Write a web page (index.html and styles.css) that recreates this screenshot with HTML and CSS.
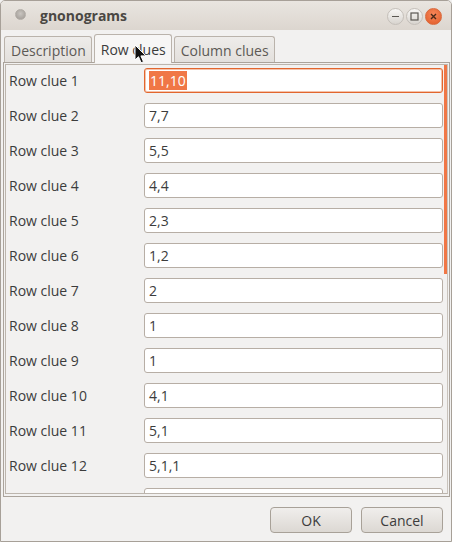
FILE: index.html
```html
<!DOCTYPE html>
<html>
<head>
<meta charset="utf-8">
<title>gnonograms</title>
<link rel="stylesheet" href="styles.css">
</head>
<body>
<div class="window">
  <div class="titlebar">
    <span class="app-dot"></span>
    <span class="title">gnonograms</span>
    <div class="wm-buttons">
      <span class="wm-btn"><svg width="17" height="17" viewBox="0 0 17 17"><path d="M5 8.5h7" stroke="#5a5752" stroke-width="1.2"/></svg></span>
      <span class="wm-btn"><svg width="17" height="17" viewBox="0 0 17 17"><rect x="5" y="5" width="7" height="7" fill="none" stroke="#5a5752" stroke-width="1.2"/></svg></span>
      <span class="wm-btn close"><svg width="17" height="17" viewBox="0 0 17 17"><path d="M6 6l5 5M11 6l-5 5" stroke="#4a2a1a" stroke-width="1.4"/></svg></span>
    </div>
  </div>
  <div class="notebook">
    <div class="tabs">
      <div class="tab">Description</div>
      <div class="tab active">Row clues</div>
      <div class="tab">Column clues</div>
    </div>
    <div class="page">
      <div class="scroller">
        <div class="rows">
          <div class="row"><span class="label">Row clue 1</span><div class="entry focus"><span class="sel">11,10</span></div></div>
          <div class="row"><span class="label">Row clue 2</span><div class="entry">7,7</div></div>
          <div class="row"><span class="label">Row clue 3</span><div class="entry">5,5</div></div>
          <div class="row"><span class="label">Row clue 4</span><div class="entry">4,4</div></div>
          <div class="row"><span class="label">Row clue 5</span><div class="entry">2,3</div></div>
          <div class="row"><span class="label">Row clue 6</span><div class="entry">1,2</div></div>
          <div class="row"><span class="label">Row clue 7</span><div class="entry">2</div></div>
          <div class="row"><span class="label">Row clue 8</span><div class="entry">1</div></div>
          <div class="row"><span class="label">Row clue 9</span><div class="entry">1</div></div>
          <div class="row"><span class="label">Row clue 10</span><div class="entry">4,1</div></div>
          <div class="row"><span class="label">Row clue 11</span><div class="entry">5,1</div></div>
          <div class="row"><span class="label">Row clue 12</span><div class="entry">5,1,1</div></div>
          <div class="row"><span class="label"></span><div class="entry"></div></div>
        </div>
        <div class="scrollbar"></div>
      </div>
    </div>
  </div>
  <div class="actions">
    <button class="btn">OK</button>
    <button class="btn">Cancel</button>
  </div>
  <svg class="cursor" width="14" height="20" viewBox="0 0 14 20"><path d="M1 1v15l3.5-3.3 2.6 6 2.4-1-2.6-5.8H12z" fill="#111" stroke="#fff" stroke-width="1"/></svg>
</div>
</body>
</html>
```

FILE: styles.css
```css
* { box-sizing: border-box; }
html, body { margin: 0; padding: 0; background: #f2f1f0; }
body { font-family: "Open Sans", "DejaVu Sans", sans-serif; color: #3c3c3c; }

.window {
  position: relative;
  width: 452px;
  height: 542px;
  border: 1px solid #a7a098;
  border-radius: 5px 5px 0 0;
  background: #f2f1f0;
  display: flex;
  flex-direction: column;
  overflow: hidden;
}

.titlebar {
  height: 29px;
  flex: none;
  display: flex;
  align-items: center;
  background: linear-gradient(#e9e5e0, #dcd6cf);
  padding-left: 14px;
}
.app-dot {
  width: 11px;
  height: 11px;
  border-radius: 50%;
  background: radial-gradient(circle at 50% 40%, #c9c5c0, #9d9892);
  border: 1px solid #b2ada7;
  margin-top: -3px;
}
.title {
  margin-left: 14px;
  font-weight: bold;
  font-size: 14px;
  color: #4a4743;
  margin-top: -1px;
}
.wm-buttons {
  margin-left: auto;
  margin-right: 9px;
  display: flex;
  gap: 2px;
  margin-top: 2px;
}
.wm-btn {
  width: 17px;
  height: 17px;
  border-radius: 50%;
  background: linear-gradient(#f8f7f5, #d8d4cf);
  border: 1px solid #c4bfb9;
  display: flex;
  align-items: center;
  justify-content: center;
}
.wm-btn svg { margin: -1px; }
.wm-btn.close {
  background: radial-gradient(circle at 50% 35%, #f7875a, #e05a26);
  border-color: #d9693c;
}

.notebook {
  flex: none;
  margin: 3px 1px 0 2px;
  display: flex;
  flex-direction: column;
}
.tabs {
  display: flex;
  align-items: flex-end;
  gap: 2px;
  padding-left: 1px;
  height: 29px;
  position: relative;
  z-index: 1;
}
.tab {
  height: 26px;
  padding: 0 5px 0 6px;
  border: 1px solid #bab3ab;
  border-bottom: none;
  border-radius: 3px 3px 0 0;
  background: linear-gradient(#eeecea, #e3e0dc);
  font-size: 14px;
  color: #5c5955;
  display: flex;
  align-items: center;
  padding-top: 1px;
}
.tab.active {
  background: #f7f6f5;
  color: #3c3c3c;
  padding: 0 5px 0 6px;
  margin-bottom: -1px;
  height: 29px;
}

.page {
  height: 435px;
  border: 1px solid #aaa39b;
  padding: 1px;
  display: flex;
}
.scroller {
  position: relative;
  flex: 1;
  border: 1px solid #bcb5ad;
  border-right-color: #c9c3bc;
  overflow: hidden;
  margin-bottom: 1px;
}
.rows {
  padding: 3px 4px 0 3px;
  display: flex;
  flex-direction: column;
  gap: 10px;
}
.row {
  display: grid;
  grid-template-columns: 135px 1fr;
  align-items: center;
  height: 25px;
}
.label {
  font-size: 14px;
  color: #3c3c3c;
}
.entry {
  height: 25px;
  border: 1px solid #b7aea5;
  border-radius: 3px;
  background: #ffffff;
  font-size: 14px;
  color: #3c3c3c;
  padding-left: 4px;
  display: flex;
  align-items: center;
}
.entry.focus {
  border-color: #e2662e;
  box-shadow: 0 0 0 1px #f4c3ab inset;
}
.sel {
  background: #f07746;
  color: #ffffff;
  padding: 0 1px;
  line-height: 19px;
}
.scrollbar {
  position: absolute;
  right: 0;
  top: 0;
  width: 3px;
  height: 209px;
  background: #f07746;
}

.actions {
  flex: 1;
  display: flex;
  justify-content: flex-end;
  align-items: flex-start;
  gap: 9px;
  padding: 10px 8px 0 0;
}
.btn {
  width: 82px;
  height: 26px;
  border: 1px solid #a8a198;
  border-radius: 4px;
  background: linear-gradient(#f0eeec, #dcd8d3);
  font-family: "Open Sans", "DejaVu Sans", sans-serif;
  font-size: 14px;
  color: #3c3c3c;
  padding: 0;
}

.cursor {
  position: absolute;
  left: 133px;
  top: 43px;
  z-index: 5;
}
```
